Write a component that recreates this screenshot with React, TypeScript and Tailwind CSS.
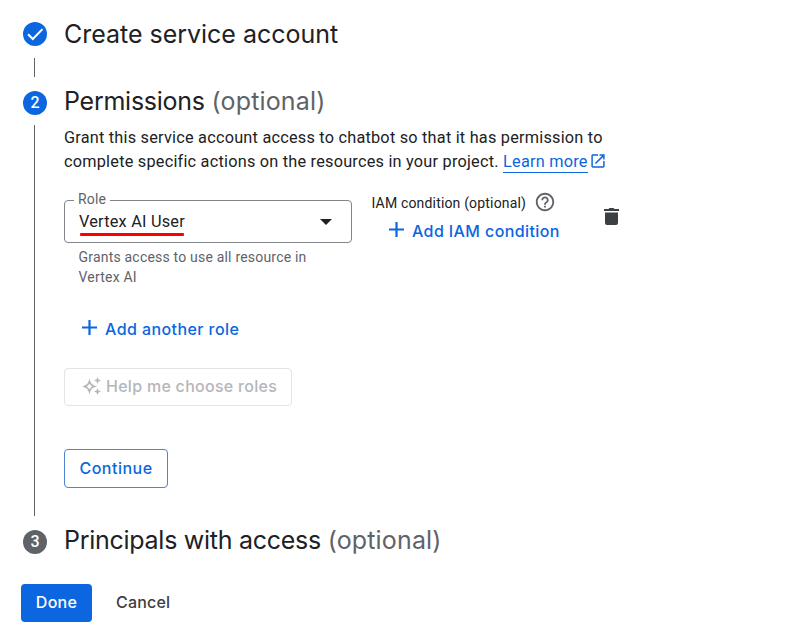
import React from "react";

const display = "font-['Inter','Roboto',sans-serif]";
const heading = "font-['Inter','Roboto',sans-serif] text-[25px] leading-6 whitespace-nowrap text-[#202124]";

function Badge({ tone, children }: { tone: string; children: React.ReactNode }) {
  return (
    <div className={`flex size-6 shrink-0 items-center justify-center rounded-full text-base font-medium leading-none text-white ${tone}`}>
      {children}
    </div>
  );
}

function Plus({ className = "" }: { className?: string }) {
  return (
    <svg className={className} width="15" height="15" viewBox="0 0 15 15">
      <path d="M6.400 0h2.200v6.400H15v2.200H8.600V15H6.400V8.600H0V6.400h6.400z" fill="#0b66e0" />
    </svg>
  );
}

export default function App() {
  return (
    <main className="h-[635px] w-[797px] overflow-hidden bg-white pt-[22px] font-['Roboto',sans-serif] text-[#202124]">
      <section className="flex h-[69px] gap-[17px] pl-[23px]">
        <div className="flex w-6 flex-col items-center">
          <Badge tone="bg-[#0b66e0]">
            <svg width="24" height="24" viewBox="0 0 24 24" fill="none">
              <path d="M5 12.200L9.800 17 19.500 7.100" stroke="#fff" strokeWidth="2" />
            </svg>
          </Badge>
          <div className="mt-3 mr-px h-[19px] w-px bg-[#5f6368]" />
        </div>
        <h2 className={`${heading} tracking-[-0.02px]`}>Create service account</h2>
      </section>

      <section className="flex h-[439px] gap-[17px] pl-[23px]">
        <div className="flex w-6 flex-col items-center">
          <Badge tone="bg-[#0b66e0]">2</Badge>
          <div className="mt-[10px] mr-px h-[391px] w-px bg-[#5f6368]" />
        </div>
        <div className="flex flex-col items-start">
          <h2 className={`${heading} -mt-0.5 tracking-[-0.25px]`}>
            Permissions <span className="tracking-[0.15px] text-[#5f6368]">(optional)</span>
          </h2>
          <div className="mt-[13px] h-12 whitespace-nowrap text-[16.300px] leading-6 tracking-[0.220px]">
            <p>Grant this service account access to chatbot so that it has permission to</p>
            <p className="flex">
              <span className="whitespace-pre">complete specific actions on the resources in your project. </span>
              <a className="h-[23px] border-b border-[#0b66e0] text-[#0b66e0]">Learn more</a>
              <svg className="mt-1 ml-[3px]" width="14" height="14" viewBox="2.500 2.500 19 19" fill="#0b66e0">
                <path d="M19 19H5V5h7V3H5a2 2 0 0 0-2 2v14a2 2 0 0 0 2 2h14c1.100 0 2-.900 2-2v-7h-2v7zM14 3v2h3.590l-9.830 9.830 1.410 1.410L19 6.410V10h2V3h-7z" />
              </svg>
            </p>
          </div>

          <div className="mt-[17px] flex h-[96px]">
            <div className="w-[288px]">
              <fieldset className="h-[52px] rounded-[4px] border border-[#80868b] pl-[9px]">
                <legend className="h-[19px] px-1 text-sm leading-4 tracking-[0.2px] text-[#5f6368]">Role</legend>
                <div className="flex h-[32px] items-start justify-between pr-[19px] pl-[5px]">
                  <div className="pt-0.5">
                    <div className="text-[16.300px] leading-5 tracking-[0.220px] whitespace-nowrap">Vertex AI User</div>
                    <div className="mt-px ml-[0.500px] h-[3px] w-[104px] rounded-[1px] bg-[#ff0000]" />
                  </div>
                  <svg className="mt-[9px]" width="12" height="6" viewBox="0 0 12 6"><path d="M0 0h12L6 6z" fill="#202124" /></svg>
                </div>
              </fieldset>
              <p className="mt-1 pl-[14.500px] text-sm leading-5 tracking-[0.2px] whitespace-nowrap text-[#5f6368]">
                Grants access to use all resource in<br />Vertex AI
              </p>
            </div>
            <div className="ml-[19.500px] w-[230px] pt-px">
              <div className="flex h-5 items-center text-sm tracking-[0.17px] whitespace-nowrap">
                <span className="pt-0.5">IAM condition (optional)</span>
                <svg className="ml-2" width="22" height="22" viewBox="0 0 24 24" fill="#5f6368">
                  <path d="M11 18h2v-2h-2v2zm1-16C6.480 2 2 6.480 2 12s4.480 10 10 10 10-4.480 10-10S17.520 2 12 2zm0 18c-4.410 0-8-3.590-8-8s3.590-8 8-8 8 3.590 8 8-3.590 8-8 8zm0-14c-2.210 0-4 1.790-4 4h2c0-1.100.900-2 2-2s2 .900 2 2c0 2-3 1.750-3 5h2c0-2.250 3-2.500 3-5 0-2.210-1.790-4-4-4z" />
                </svg>
              </div>
              <button className={`${display} mt-[7px] ml-[17.500px] flex h-6 items-center gap-2 text-base font-medium tracking-[0.4px] whitespace-nowrap text-[#0b66e0]`}>
                <Plus className="-mt-[3px]" />
                <span>Add IAM condition</span>
              </button>
            </div>
            <svg className="mt-[17px] ml-[2.500px]" width="15" height="17" viewBox="0 0 15 17" fill="#3c4043">
              <path d="M0 1h4.500l1-1h4l1 1H15v2H0zM1 4.500h13V15a2 2 0 0 1-2 2H3a2 2 0 0 1-2-2z" />
            </svg>
          </div>

          <button className={`${display} mt-[30px] ml-[18px] flex h-6 items-center gap-2 text-base font-medium tracking-[0.42px] whitespace-nowrap text-[#0b66e0]`}>
            <Plus className="-mt-[3px]" />
            <span>Add another role</span>
          </button>

          <button className={`${display} mt-[27px] flex h-[38px] w-[228px] items-center rounded-[4px] border border-[#e4e4e5] pl-[18px] text-base font-medium tracking-[0.28px] whitespace-nowrap text-[#b5b6b7]`}>
            <svg className="mr-[5px] -mt-0.5" width="18" height="18" viewBox="0 0 18 18">
              <path d="M6.500 4.500Q7.600 8.400 11.500 9.500Q7.600 10.600 6.500 14.500Q5.400 10.600 1.500 9.500Q5.400 8.400 6.500 4.500z" fill="none" stroke="#b5b6b7" strokeWidth="1.600" />
              <path d="M14.500 0l1 2.500 2.500 1-2.500 1-1 2.500-1-2.500-2.500-1 2.500-1zM14.500 11l1 2.500 2.500 1-2.500 1-1 2.500-1-2.500-2.500-1 2.500-1z" fill="#b5b6b7" />
            </svg>
            <span className="-mt-0.5">Help me choose roles</span>
          </button>

          <button className={`${display} mt-[43px] flex h-[39px] w-[104px] items-center justify-center rounded-[4px] border border-[#4f83d6] text-base font-medium tracking-[0.5px] text-[#0b66e0]`}>
            <span className="-mt-0.5">Continue</span>
          </button>
        </div>
      </section>

      <section className="flex h-[54px] gap-[17px] pl-[23px]">
        <Badge tone="bg-[#5f6368]">3</Badge>
        <h2 className={`${heading} -mt-0.5 tracking-[-0.27px]`}>
          Principals with access <span className="tracking-[0.15px] text-[#5f6368]">(optional)</span>
        </h2>
      </section>

      <footer className={`${display} flex h-[38px] items-center pl-[21px] text-base font-medium`}>
        <button className="h-[38px] w-[71px] rounded-[4px] bg-[#0b66e0] pb-0.5 tracking-[0.3px] text-white"><span>Done</span></button>
        <button className="ml-6 pb-0.5 tracking-[0.2px] text-[#3c4043]"><span>Cancel</span></button>
      </footer>
    </main>
  );
}
